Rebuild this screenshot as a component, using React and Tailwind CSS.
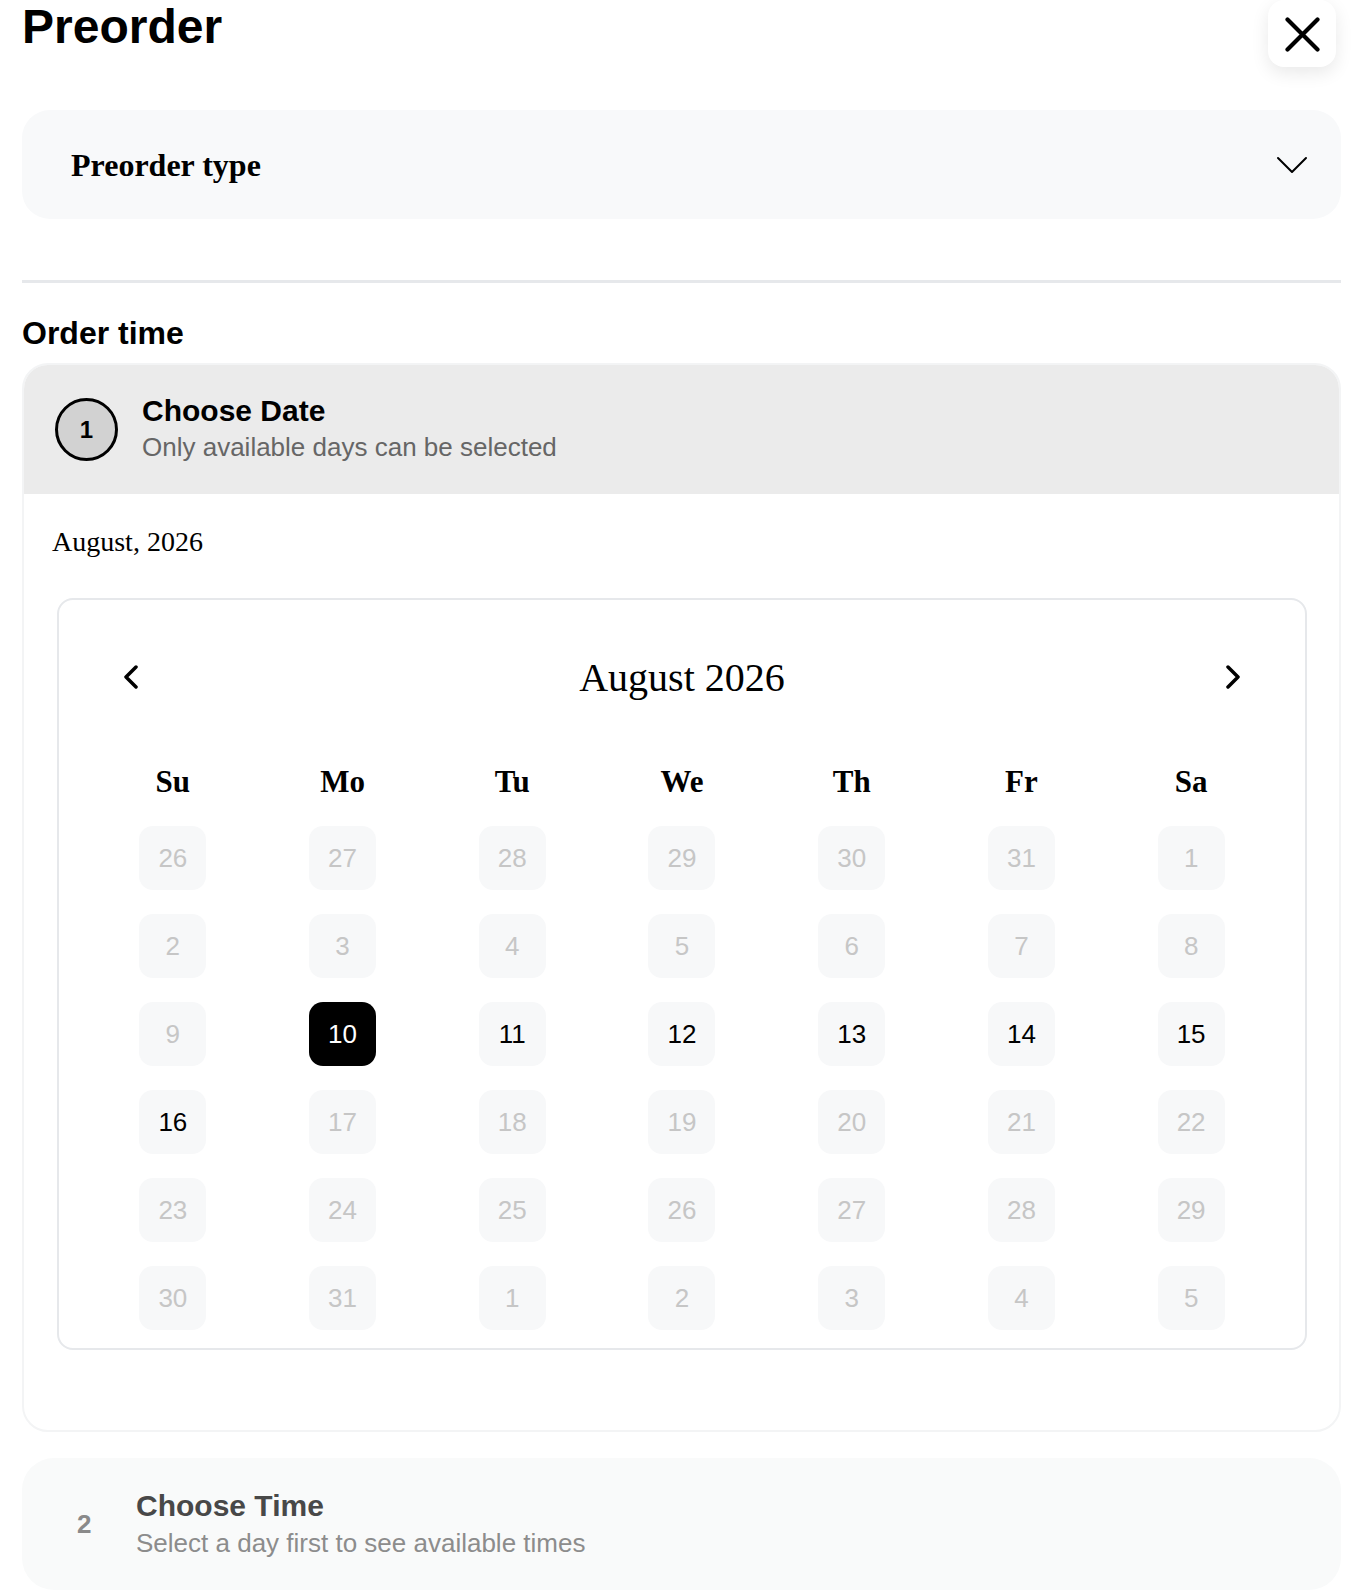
import React from "react";

const SANS = { fontFamily: '"Liberation Sans", Arial, sans-serif' };

const WEEKDAYS = ["Su", "Mo", "Tu", "We", "Th", "Fr", "Sa"];

// grid of the month, [day, enabled]
const DAYS = [
  26, 27, 28, 29, 30, 31, 1,
  2, 3, 4, 5, 6, 7, 8,
  9, 10, 11, 12, 13, 14, 15,
  16, 17, 18, 19, 20, 21, 22,
  23, 24, 25, 26, 27, 28, 29,
  30, 31, 1, 2, 3, 4, 5,
].map((d, i) => [d, i >= 15 && i <= 21]);

const SELECTED = 15;

function CloseIcon() {
  return (
    <svg width="35" height="35" viewBox="0 0 35 35" fill="none">
      <path d="M2.5 2.5 L32.5 32.5 M32.5 2.5 L2.5 32.5" stroke="black" strokeWidth="4.2" strokeLinecap="round" />
    </svg>
  );
}

function ChevronDown() {
  return (
    <svg width="32" height="18" viewBox="0 0 32 18" fill="none">
      <polyline points="2,2 16,16 30,2" stroke="black" strokeWidth="2" strokeLinecap="round" strokeLinejoin="round" />
    </svg>
  );
}

function Chevron({ dir }) {
  const pts = dir === "left" ? "13,2 3,12 13,22" : "3,2 13,12 3,22";
  return (
    <svg width="16" height="24" viewBox="0 0 16 24" fill="none">
      <polyline points={pts} stroke="black" strokeWidth="3.5" strokeLinecap="round" strokeLinejoin="round" />
    </svg>
  );
}

function DayCell({ day, enabled, selected }) {
  let cls = "bg-[#f7f8f9] text-[#c6c6c6]";
  if (enabled) cls = "bg-[#f7f8f9] text-black";
  if (selected) cls = "bg-black text-white";
  return (
    <div className="flex justify-center">
      <div
        className={`flex h-[64px] w-[67px] items-center justify-center rounded-[14px] text-[26px] ${cls}`}
        style={SANS}
      >
        {day}
      </div>
    </div>
  );
}

export default function App() {
  return (
    <div className="min-h-[1592px] bg-white px-[22px] pr-[21px] text-black" style={SANS}>
      <div className="flex items-start justify-between">
        <h1 className="mt-[3px] text-[48px] font-bold leading-[48px]">Preorder</h1>
        <button className="mr-[5px] flex h-[67px] w-[68px] items-center justify-center rounded-[16px] bg-white pt-[1px] shadow-[0_6px_18px_rgba(0,0,0,0.09)]">
          <CloseIcon />
        </button>
      </div>

      <div className="mt-[43px] flex h-[109px] items-center justify-between rounded-[28px] bg-[#f8f9fa] pl-[49px] pr-[33px]">
        <span className="text-[32px] font-bold" style={{ fontFamily: '"Liberation Serif", "Times New Roman", serif' }}>
          Preorder type
        </span>
        <ChevronDown />
      </div>

      <div className="mt-[61px] h-[3px] bg-[#e6e8eb]" />

      <h2 className="mt-[30px] text-[32px] font-bold leading-[40px]">Order time</h2>

      <div className="mt-[10px] overflow-hidden rounded-[26px] border-2 border-[#f3f4f5]">
        <div className="flex h-[129px] items-center gap-[24px] bg-[#ebebeb] pl-[31px]">
          <div className="flex h-[63px] w-[63px] items-center justify-center rounded-full border-[3px] border-black bg-[#d2d2d2] text-[24px] font-bold">
            1
          </div>
          <div className="-mt-[2px]">
            <div className="text-[30px] font-bold leading-[36px]">Choose Date</div>
            <div className="text-[26px] leading-[36px] text-[#666666]">Only available days can be selected</div>
          </div>
        </div>

        <div className="pb-[80px] pl-[28px] pr-[32px] pt-[32px]" style={{ fontFamily: '"Liberation Serif", "Times New Roman", serif' }}>
          <div className="text-[28px] leading-[32px]">August, 2026</div>

          <div className="ml-[5px] mt-[40px] rounded-[16px] border-2 border-[#e6e8eb] px-[29px] pb-[18px] pt-[54px]">
            <div className="flex h-[48px] items-center justify-between px-[31px]">
              <button className="-mt-[2px] flex h-[48px] w-[24px] items-center justify-center">
                <Chevron dir="left" />
              </button>
              <div className="text-[40px] leading-[48px]">August 2026</div>
              <button className="-mt-[2px] flex h-[48px] w-[24px] items-center justify-center">
                <Chevron dir="right" />
              </button>
            </div>

            <div className="mt-[60px] grid grid-cols-7">
              {WEEKDAYS.map((w) => (
                <div key={w} className="text-center text-[31px] font-bold leading-[40px]">
                  {w}
                </div>
              ))}
            </div>

            <div className="mt-[24px] grid grid-cols-7 gap-y-[24px]">
              {DAYS.map(([d, en], i) => (
                <DayCell key={i} day={d} enabled={en} selected={i === SELECTED} />
              ))}
            </div>
          </div>
        </div>
      </div>

      <div className="mt-[26px] flex h-[132px] items-center rounded-[32px] bg-[#f9fafa] pl-[55px]">
        <div className="w-[46px] text-[26px] font-bold text-[#8a8a8a]">2</div>
        <div className="ml-[13px]">
          <div className="text-[30px] font-bold leading-[36px] text-[#484848]">Choose Time</div>
          <div className="mt-[1px] text-[26px] leading-[36px] text-[#8c8c8c]">Select a day first to see available times</div>
        </div>
      </div>
    </div>
  );
}
